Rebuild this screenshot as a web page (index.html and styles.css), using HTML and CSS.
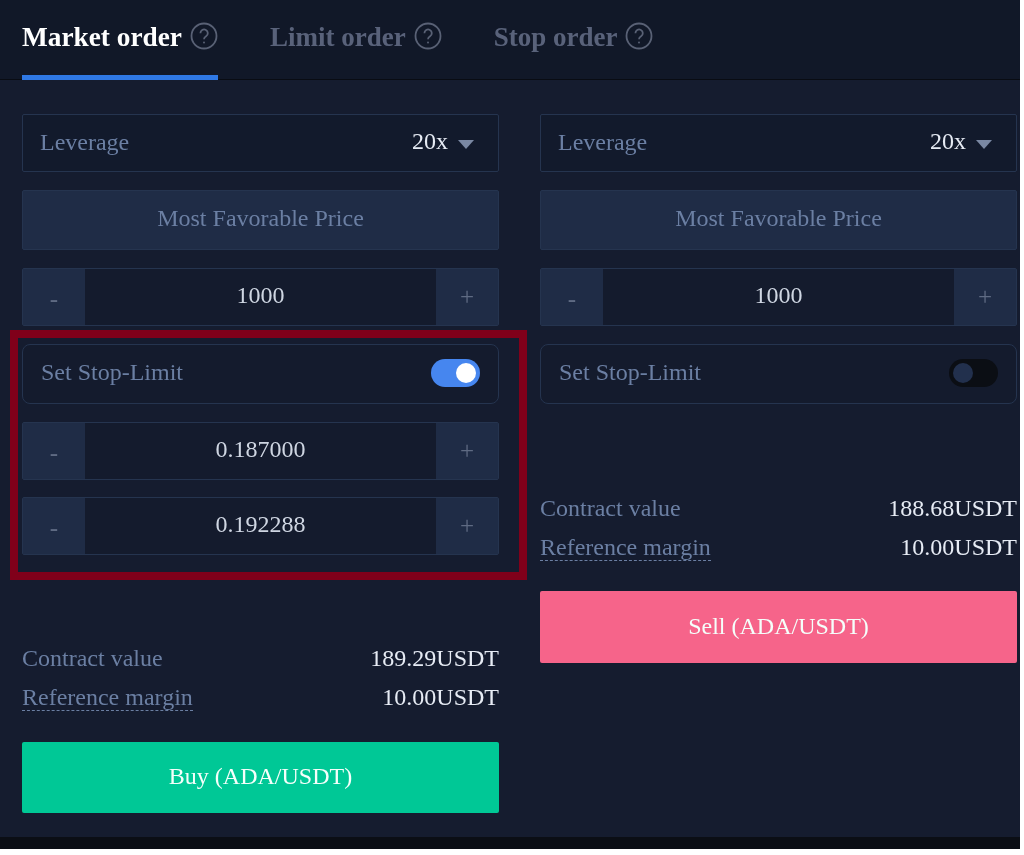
FILE: index.html
```html
<!DOCTYPE html>
<html lang="en">
<head>
<meta charset="utf-8">
<title>Order panel</title>
<link rel="stylesheet" href="styles.css">
</head>
<body>
<div class="panel">
  <nav class="tabs">
    <div class="tab active"><span>Market order</span>
      <svg class="help" viewBox="0 0 28 28"><circle cx="14" cy="14" r="12.5"/><path d="M10.4 11.2a3.7 3.7 0 1 1 5.7 3.1c-1.3.8-2.1 1.5-2.1 3"/><circle class="dot" cx="14" cy="20.4" r="1"/></svg>
    </div>
    <div class="tab"><span>Limit order</span>
      <svg class="help" viewBox="0 0 28 28"><circle cx="14" cy="14" r="12.5"/><path d="M10.4 11.2a3.7 3.7 0 1 1 5.7 3.1c-1.3.8-2.1 1.5-2.1 3"/><circle class="dot" cx="14" cy="20.4" r="1"/></svg>
    </div>
    <div class="tab"><span>Stop order</span>
      <svg class="help" viewBox="0 0 28 28"><circle cx="14" cy="14" r="12.5"/><path d="M10.4 11.2a3.7 3.7 0 1 1 5.7 3.1c-1.3.8-2.1 1.5-2.1 3"/><circle class="dot" cx="14" cy="20.4" r="1"/></svg>
    </div>
  </nav>
  <main class="columns">
    <section class="col">
      <div class="row select"><span class="muted">Leverage</span><span class="value">20x<i class="caret"></i></span></div>
      <div class="row market">Most Favorable Price</div>
      <div class="row stepper"><span class="step minus">-</span><span class="num">1000</span><span class="step">+</span></div>
      <div class="row switch-row"><span class="muted">Set Stop-Limit</span><span class="switch on"><i></i></span></div>
      <div class="row stepper"><span class="step minus">-</span><span class="num">0.187000</span><span class="step">+</span></div>
      <div class="row stepper tight"><span class="step minus">-</span><span class="num">0.192288</span><span class="step">+</span></div>
      <div class="summary long">
        <div class="line"><span class="muted">Contract value</span><span class="value">189.29USDT</span></div>
        <div class="line"><span class="muted dashed">Reference margin</span><span class="value">10.00USDT</span></div>
      </div>
      <button class="action buy">Buy (ADA/USDT)</button>
    </section>
    <section class="col">
      <div class="row select"><span class="muted">Leverage</span><span class="value">20x<i class="caret"></i></span></div>
      <div class="row market">Most Favorable Price</div>
      <div class="row stepper"><span class="step minus">-</span><span class="num">1000</span><span class="step">+</span></div>
      <div class="row switch-row"><span class="muted">Set Stop-Limit</span><span class="switch"><i></i></span></div>
      <div class="summary short">
        <div class="line"><span class="muted">Contract value</span><span class="value">188.68USDT</span></div>
        <div class="line"><span class="muted dashed">Reference margin</span><span class="value">10.00USDT</span></div>
      </div>
      <button class="action sell">Sell (ADA/USDT)</button>
    </section>
  </main>
  <div class="highlight"></div>
</div>
</body>
</html>
```
FILE: styles.css
```css
* { box-sizing: border-box; }
html, body { margin: 0; background: #fff; }
body { height: 855px; overflow: hidden; font-family: "Liberation Serif", "Times New Roman", serif; }
.panel {
  position: relative;
  width: 1020px;
  height: 849px;
  background: #151c2f;
  border-bottom: 12px solid #0b0e15;
  font-size: 24px;
  color: #dfe5f0;
  filter: blur(0.45px);
}
.tabs {
  display: flex;
  height: 80px;
  padding-left: 22px;
  gap: 52px;
  background: #111828;
  border-bottom: 1px solid #090c13;
}
.tab {
  display: flex;
  align-items: flex-start;
  gap: 8px;
  height: 80px;
  padding-top: 22px;
  font-size: 27px;
  font-weight: 700;
  line-height: 30px;
  color: #59627a;
}
.tab.active { font-size: 27.3px; color: #fff; border-bottom: 5px solid #2f78e4; }
.help { width: 28px; height: 28px; margin-top: 0; fill: none; stroke: #596175; stroke-width: 1.8; }
.help .dot { fill: #596175; stroke: none; }
.columns { display: flex; gap: 41px; padding: 34px 0 0 22px; }
.col { width: 477px; display: flex; flex-direction: column; }
.row { width: 100%; display: flex; align-items: center; margin-bottom: 18px; border: 1px solid #25344f; border-radius: 2px; }
.muted { color: #6b7fa3; }
.value { color: #e6ebf4; }
.select { height: 58px; justify-content: space-between; padding: 0 24px 0 17px; background: #121a2c; }
.select .muted { margin-top: -2px; }
.select .value { display: flex; align-items: center; margin-top: -3px; }
.caret { width: 0; height: 0; margin: 5px 0 0 10px; border: 8px solid transparent; border-top: 9px solid #7a88a3; border-bottom: 0; }
.market { height: 60px; justify-content: center; padding-bottom: 3px; background: #1f2c46; color: #6b7fa3; }
.stepper { height: 58px; background: #141b2d; }
.stepper.tight { margin-bottom: 0; margin-top: -1px; }
.step { width: 62px; height: 100%; display: flex; align-items: center; justify-content: center; background: #1f2c46; color: #5f6b83; font-size: 25px; }
.minus { padding-top: 4px; }
.num { flex: 1; text-align: center; color: #cfd6e2; padding-bottom: 3px; }
.switch-row { height: 60px; justify-content: space-between; padding: 0 18px; border-radius: 8px; background: #141b2d; }
.switch-row .muted { padding-bottom: 3px; }
.switch { width: 49px; height: 28px; margin-top: -2px; padding: 4px; border-radius: 14px; background: #0b0e14; display: flex; }
.switch i { width: 20px; height: 20px; border-radius: 50%; background: #22304d; }
.switch.on { background: #4686ef; justify-content: flex-end; }
.switch.on i { background: #fff; }
.summary { display: flex; flex-direction: column; gap: 12px; }
.summary.long { margin-top: 90px; }
.summary.short { margin-top: 73px; }
.line { display: flex; justify-content: space-between; line-height: 27px; }
.dashed { border-bottom: 1px dashed #6b7fa3; line-height: 26px; height: 27px; }
.action {
  width: 100%;
  border: 0;
  border-radius: 2px;
  color: #f5fffb;
  font: inherit;
  display: flex;
  align-items: center;
  justify-content: center;
  padding: 0 0 2px;
}
.buy { height: 71px; margin-top: 31px; background: #00c896; }
.sell { height: 72px; margin-top: 30px; background: #f6648a; }
.highlight { position: absolute; left: 10px; top: 330px; width: 517px; height: 250px; border: 8px solid #80001a; pointer-events: none; }
```
